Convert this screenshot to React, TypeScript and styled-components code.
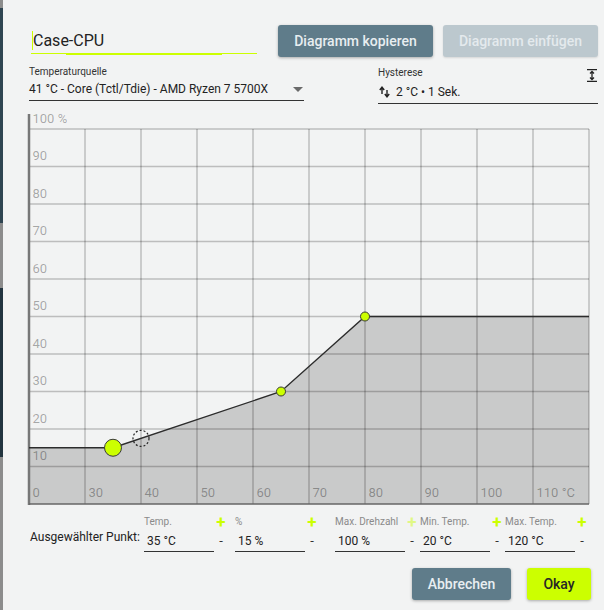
import React from "react";
import styled, { createGlobalStyle, css } from "styled-components";

const LIME = "#ccff00";

const GlobalStyle = createGlobalStyle`
  html, body {
    margin: 0;
    padding: 0;
  }
  body {
    background: #f2f3f3;
    font-family: Roboto, "Noto Sans", "Liberation Sans", sans-serif;
    color: #222;
    overflow: hidden;
  }
`;

const Screen = styled.div`
  display: flex;
  width: 604px;
  height: 610px;
`;

const Backdrop = styled.div`
  display: flex;
  flex-direction: column;
  width: 3px;
  flex: none;
`;

const BackdropBand = styled.div<{ $h?: number; $tone: string }>`
  background: ${(p) => p.$tone};
  ${(p) =>
    p.$h
      ? css`
          height: ${p.$h}px;
          flex: none;
        `
      : css`
          flex: 1;
        `}
`;

const Dialog = styled.div`
  flex: 1;
  display: flex;
  flex-direction: column;
  padding-top: 25px;
  background: #f2f3f3;
`;

const HeaderRow = styled.div`
  display: flex;
  align-items: flex-start;
  padding: 0 6px 0 28px;
`;

const TitleField = styled.div`
  position: relative;
  width: 226px;
  height: 28px;
  border-bottom: 1px solid ${LIME};
`;

const TitleText = styled.div`
  padding: 6px 0 0 2px;
  font-size: 16px;
  line-height: 20px;
  color: #222;
`;

const Caret = styled.span`
  position: absolute;
  left: 1px;
  top: 6px;
  width: 1px;
  height: 19px;
  background: ${LIME};
`;

const FocusBar = styled.span`
  position: absolute;
  left: 35px;
  bottom: -2px;
  width: 156px;
  height: 2px;
  background: ${LIME};
`;

const ButtonGroup = styled.div<{ $gap: number }>`
  display: flex;
  gap: ${(p) => p.$gap}px;
  margin-left: auto;
`;

type Tone = "primary" | "disabled" | "accent";

const toneStyles: Record<Tone, ReturnType<typeof css>> = {
  primary: css`
    background: #5f7c8a;
    color: #e8eef1;
    box-shadow: 0 1px 3px rgba(0, 0, 0, 0.3);
  `,
  disabled: css`
    background: #bcc8ce;
    color: #e4eaed;
    box-shadow: 0 1px 2px rgba(0, 0, 0, 0.12);
  `,
  accent: css`
    background: ${LIME};
    color: #262626;
    box-shadow: 0 1px 3px rgba(0, 0, 0, 0.3);
  `,
};

const ActionButton = styled.button<{ $tone: Tone; $w: number }>`
  width: ${(p) => p.$w}px;
  height: 32px;
  border: none;
  border-radius: 3px;
  padding: 0;
  font-family: Roboto, "Noto Sans", sans-serif;
  font-size: 14px;
  font-weight: 500;
  cursor: pointer;
  ${(p) => toneStyles[p.$tone]}
`;

const SourceRow = styled.div`
  display: flex;
  align-items: flex-start;
  margin-top: 9px;
  padding-left: 26px;
`;

const SourceField = styled.div`
  width: 275px;
`;

const HysteresisField = styled.div`
  width: 220px;
  margin-left: 74px;
  padding-top: 1px;
`;

const SmallLabel = styled.div`
  font-size: 10px;
  line-height: 12px;
  color: #333;
`;

const LabelRow = styled.div`
  display: flex;
  justify-content: space-between;
  height: 12px;
`;

const SelectValue = styled.div<{ $top: number }>`
  display: flex;
  align-items: center;
  height: 16px;
  margin-top: ${(p) => p.$top}px;
  padding-bottom: 3px;
  border-bottom: 1px solid #333;
  font-size: 12px;
  line-height: 16px;
  color: #222;
  white-space: nowrap;
`;

const DropArrow = styled.span`
  margin-left: auto;
  margin-right: 1px;
  width: 0;
  height: 0;
  border-left: 5px solid transparent;
  border-right: 5px solid transparent;
  border-top: 5px solid #6a6a6a;
`;

const ChartSvg = styled.svg`
  display: block;
  margin-top: 6px;
  flex: none;
`;

const PointRow = styled.div`
  display: flex;
  align-items: flex-start;
  margin-top: 6px;
  padding-left: 27px;
`;

const PointLabel = styled.div`
  width: 114px;
  flex: none;
  margin-top: 13px;
  font-size: 12px;
  line-height: 16px;
  white-space: nowrap;
`;

const PointGroup = styled.div<{ $gap: number }>`
  display: flex;
  margin-left: ${(p) => p.$gap}px;
`;

const PointField = styled.div`
  width: 70px;
  flex: none;
`;

const PointFieldLabel = styled.div`
  font-size: 10px;
  line-height: 12px;
  color: #8a8a8a;
  white-space: nowrap;
`;

const PointValue = styled.div`
  margin-top: 5px;
  height: 16px;
  padding: 0 0 2px 3px;
  border-bottom: 1px solid #333;
  font-size: 12px;
  line-height: 16px;
`;

const Stepper = styled.div`
  display: flex;
  flex-direction: column;
  align-items: center;
  width: 14px;
  flex: none;
`;

const StepPlus = styled.span<{ $off?: boolean }>`
  height: 12px;
  font-size: 17px;
  font-weight: 700;
  line-height: 13px;
  color: ${LIME};
  opacity: ${(p) => (p.$off ? 0.45 : 1)};
`;

const StepMinus = styled.span`
  margin-top: 5px;
  font-size: 13px;
  line-height: 16px;
  color: #333;
`;

const FooterRow = styled.div`
  display: flex;
  justify-content: flex-end;
  gap: 16px;
  margin-top: 16px;
  padding-right: 13px;
`;

// chart geometry, in page coordinates
const X0 = 29;
const COL = 56;
const Y0 = 504;
const ROW = 3.75;
const tx = (t: number) => (t < 30 ? X0 + (t * COL) / 30 : X0 + COL + (t - 30) * (COL / 10));
const py = (v: number) => Y0 - v * ROW;

const curve = [
  { t: 35, v: 15, big: true },
  { t: 65, v: 30 },
  { t: 80, v: 50 },
];

const xLabels = ["0", "30", "40", "50", "60", "70", "80", "90", "100", "110 °C"];

const FanChart: React.FC = () => {
  const right = X0 + COL * 10;
  const pts = curve.map((c) => `${tx(c.t)},${py(c.v)}`);
  const first = curve[0];
  const last = curve[curve.length - 1];
  const line = [`${X0},${py(first.v)}`, ...pts, `${right},${py(last.v)}`].join(" ");
  const area = `${line} ${right},${Y0} ${X0},${Y0}`;
  const grid = "rgba(0,0,0,0.22)";
  const ink = "rgba(0,0,0,0.33)";

  return (
    <ChartSvg width={601} height={400} viewBox="3 110 601 400">
      <polygon points={area} fill="#c9caca" />
      {Array.from({ length: 10 }, (_, k) => (
        <line key={`h${k}`} x1={X0} x2={right} y1={py((k + 1) * 10)} y2={py((k + 1) * 10)} stroke={grid} strokeWidth={1.5} />
      ))}
      {Array.from({ length: 10 }, (_, i) => (
        <line key={`v${i}`} x1={X0 + COL * (i + 1)} x2={X0 + COL * (i + 1)} y1={py(100)} y2={Y0} stroke={grid} strokeWidth={1.5} />
      ))}
      <line x1={X0} x2={X0} y1={114} y2={Y0 + 1} stroke="#777" strokeWidth={2.5} />
      <line x1={X0} x2={right} y1={Y0} y2={Y0} stroke="#666" strokeWidth={1.5} />
      {Array.from({ length: 10 }, (_, k) => (
        <text key={`yl${k}`} x={X0 + 3.5} y={py((k + 1) * 10) - 6.5} fontSize={13} fill={ink} fontFamily="Roboto, sans-serif">
          {k === 9 ? "100 %" : `${(k + 1) * 10}`}
        </text>
      ))}
      {xLabels.map((l, i) => (
        <text key={`xl${i}`} x={X0 + COL * i + 3.5} y={Y0 - 7} fontSize={13} fill={ink} fontFamily="Roboto, sans-serif">
          {l}
        </text>
      ))}
      <polyline points={line} fill="none" stroke="#2c2c2c" strokeWidth={1.4} />
      <circle cx={tx(40)} cy={py(17.5)} r={8} fill="none" stroke="#222" strokeWidth={1.2} strokeDasharray="2 2" />
      {curve.map((c) => (
        <circle key={c.t} cx={tx(c.t)} cy={py(c.v)} r={c.big ? 8.5 : 4.5} fill={LIME} stroke="#3a3a3a" strokeWidth={1} />
      ))}
    </ChartSvg>
  );
};

const SwapIcon: React.FC = () => (
  <svg width="11" height="12" viewBox="0 0 11 12" style={{ marginLeft: 1, marginRight: 6 }}>
    <path d="M3 8V2M0.8 4L3 1.2 5.2 4" fill="none" stroke="#222" strokeWidth={1.4} />
    <path d="M8 4v6M5.8 8L8 10.8 10.2 8" fill="none" stroke="#222" strokeWidth={1.4} />
  </svg>
);

const HeightIcon: React.FC = () => (
  <svg width="10" height="13" viewBox="0 0 10 13" style={{ marginTop: 2, marginRight: 1 }}>
    <path d="M0 0.7h10M0 12.3h10" stroke="#222" strokeWidth={1.3} />
    <path d="M5 2.5v8M3 4.5L5 2.5 7 4.5M3 8.5L5 10.5 7 8.5" fill="none" stroke="#222" strokeWidth={1.3} />
  </svg>
);

type PointSpec = { label: string; value: string; gap: number; plusOff?: boolean };

const pointFields: PointSpec[] = [
  { label: "Temp.", value: "35 °C", gap: 0 },
  { label: "%", value: "15 %", gap: 7 },
  { label: "Max. Drehzahl", value: "100 %", gap: 16, plusOff: true },
  { label: "Min. Temp.", value: "20 °C", gap: 1 },
  { label: "Max. Temp.", value: "120 °C", gap: 1 },
];

const App: React.FC = () => {
  return (
    <>
      <GlobalStyle />
      <Screen>
        <Backdrop>
          <BackdropBand $h={8} $tone="#8c8c8c" />
          <BackdropBand $h={215} $tone="#2f4551" />
          <BackdropBand $h={65} $tone="#8c8c8c" />
          <BackdropBand $h={169} $tone="#22343f" />
          <BackdropBand $tone="#8c8c8c" />
        </Backdrop>
        <Dialog>
          <HeaderRow>
            <TitleField>
              <TitleText>Case-CPU</TitleText>
              <Caret />
              <FocusBar />
            </TitleField>
            <ButtonGroup $gap={10}>
              <ActionButton $tone="primary" $w={155}>
                Diagramm kopieren
              </ActionButton>
              <ActionButton $tone="disabled" $w={155}>
                Diagramm einfügen
              </ActionButton>
            </ButtonGroup>
          </HeaderRow>

          <SourceRow>
            <SourceField>
              <SmallLabel>Temperaturquelle</SmallLabel>
              <SelectValue $top={3}>
                41 °C - Core (Tctl/Tdie) - AMD Ryzen 7 5700X
                <DropArrow />
              </SelectValue>
            </SourceField>
            <HysteresisField>
              <LabelRow>
                <SmallLabel>Hysterese</SmallLabel>
                <HeightIcon />
              </LabelRow>
              <SelectValue $top={5}>
                <SwapIcon />2 °C • 1 Sek.
              </SelectValue>
            </HysteresisField>
          </SourceRow>

          <FanChart />

          <PointRow>
            <PointLabel>Ausgewählter Punkt:</PointLabel>
            {pointFields.map((f) => (
              <PointGroup key={f.label} $gap={f.gap}>
                <PointField>
                  <PointFieldLabel>{f.label}</PointFieldLabel>
                  <PointValue>{f.value}</PointValue>
                </PointField>
                <Stepper>
                  <StepPlus $off={f.plusOff}>+</StepPlus>
                  <StepMinus>-</StepMinus>
                </Stepper>
              </PointGroup>
            ))}
          </PointRow>

          <FooterRow>
            <ActionButton $tone="primary" $w={99}>
              Abbrechen
            </ActionButton>
            <ActionButton $tone="accent" $w={64}>
              Okay
            </ActionButton>
          </FooterRow>
        </Dialog>
      </Screen>
    </>
  );
};

export default App;
